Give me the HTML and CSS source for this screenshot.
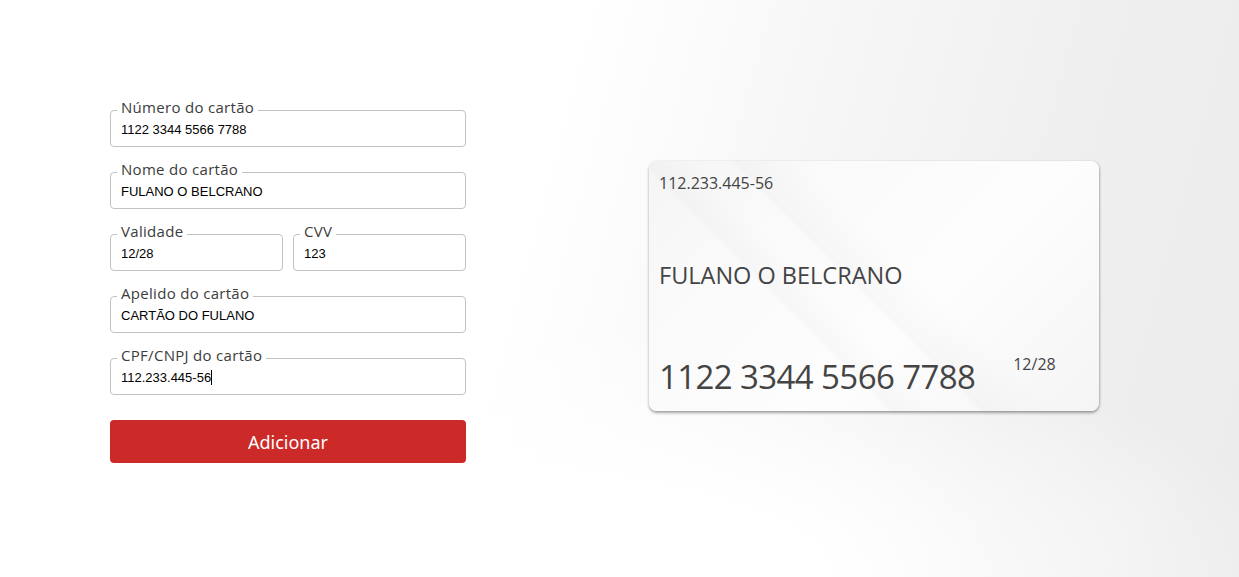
FILE: index.html
```html
<!DOCTYPE html>
<html lang="pt-BR">
<head>
<meta charset="utf-8">
<title>Adicionar cartão</title>
<link rel="stylesheet" href="styles.css">
</head>
<body>
<main class="page">
  <form class="form">
    <fieldset class="field">
      <legend>Número do cartão</legend>
      <input class="input" type="text" value="1122 3344 5566 7788">
    </fieldset>
    <fieldset class="field">
      <legend>Nome do cartão</legend>
      <input class="input" type="text" value="FULANO O BELCRANO">
    </fieldset>
    <div class="row">
      <fieldset class="field">
        <legend>Validade</legend>
        <input class="input" type="text" value="12/28">
      </fieldset>
      <fieldset class="field">
        <legend>CVV</legend>
        <input class="input" type="text" value="123">
      </fieldset>
    </div>
    <fieldset class="field">
      <legend>Apelido do cartão</legend>
      <input class="input" type="text" value="CARTÃO DO FULANO">
    </fieldset>
    <fieldset class="field">
      <legend>CPF/CNPJ do cartão</legend>
      <div class="input">112.233.445-56<span class="caret"></span></div>
    </fieldset>
    <button class="btn" type="button">Adicionar</button>
  </form>

  <section class="card">
    <div class="card-doc">112.233.445-56</div>
    <div class="card-name">FULANO O BELCRANO</div>
    <div class="card-bottom">
      <div class="card-number">1122 3344 5566 7788</div>
      <div class="card-exp">12/28</div>
    </div>
  </section>
</main>
</body>
</html>
```

FILE: styles.css
```css
* { box-sizing: border-box; }

html, body {
  margin: 0;
  height: 100%;
}

body {
  font-family: "Open Sans", "Noto Sans", sans-serif;
  background:
    radial-gradient(ellipse 60% 45% at 45% 100%, #ffffff 35%, rgba(255,255,255,0) 100%),
    linear-gradient(105deg, #ffffff 0%, #ffffff 42%, #f6f6f6 62%, #efefef 80%, #ececec 100%);
  overflow: hidden;
}

.page {
  display: flex;
  align-items: flex-start;
  padding-left: 110px;
  gap: 183px;
  height: 100%;
}

.form {
  width: 356px;
  margin-top: 97px;
  display: flex;
  flex-direction: column;
  gap: 12px;
}

.row {
  display: flex;
  gap: 10px;
}

.row .field {
  flex: 1;
}

.field {
  margin: 0;
  border: 1px solid #c2c2c2;
  border-radius: 4px;
  padding: 0 6px 6px;
  min-width: 0;
}

.field legend {
  padding: 0 4px 6px 4px;
  font-family: "Open Sans", sans-serif;
  font-size: 15px;
  line-height: 20px;
  color: #3c3c3c;
  letter-spacing: 0.3px;
}

.input {
  display: block;
  width: 100%;
  height: 20px;
  margin-top: -3px;
  border: 0;
  outline: 0;
  background: transparent;
  padding: 0 0 0 4px;
  font-family: "Liberation Sans", Arial, sans-serif;
  font-size: 13px;
  line-height: 20px;
  color: #000;
}

.caret {
  display: inline-block;
  width: 1px;
  height: 15px;
  background: #000;
  vertical-align: -3px;
}

.btn {
  margin-top: 13px;
  height: 43px;
  border: 0;
  border-radius: 4px;
  background: #cc2a28;
  color: #fff;
  font-family: "Noto Sans", sans-serif;
  font-size: 18px;
  cursor: pointer;
}

.card {
  margin-top: 161px;
  width: 450px;
  height: 250px;
  border-radius: 8px;
  padding: 12px 10px 14px 10px;
  display: flex;
  flex-direction: column;
  justify-content: space-between;
  color: #444;
  box-shadow: 0 2px 3px rgba(0,0,0,0.35), 1px 0 2px rgba(0,0,0,0.12);
  background:
    linear-gradient(45deg, rgba(0,0,0,0) 0%, rgba(0,0,0,0) 34%, rgba(0,0,0,0.018) 35%, rgba(0,0,0,0) 42%, rgba(0,0,0,0) 100%),
    linear-gradient(45deg, rgba(0,0,0,0) 0%, rgba(0,0,0,0) 47%, rgba(0,0,0,0.02) 48%, rgba(0,0,0,0) 58%, rgba(0,0,0,0) 100%),
    linear-gradient(135deg, #f5f5f5 0%, #fafafa 25%, #fdfdfd 60%, #f5f5f5 100%);
}

.card-doc {
  font-size: 16px;
  line-height: 20px;
}

.card-name {
  font-size: 23.5px;
  line-height: 28px;
}

.card-bottom {
  display: flex;
  align-items: flex-start;
  gap: 38px;
}

.card-number {
  font-size: 33px;
  line-height: 40px;
  letter-spacing: -0.6px;
}

.card-exp {
  font-size: 16px;
  line-height: 20px;
  margin-top: -3px;
}
```
